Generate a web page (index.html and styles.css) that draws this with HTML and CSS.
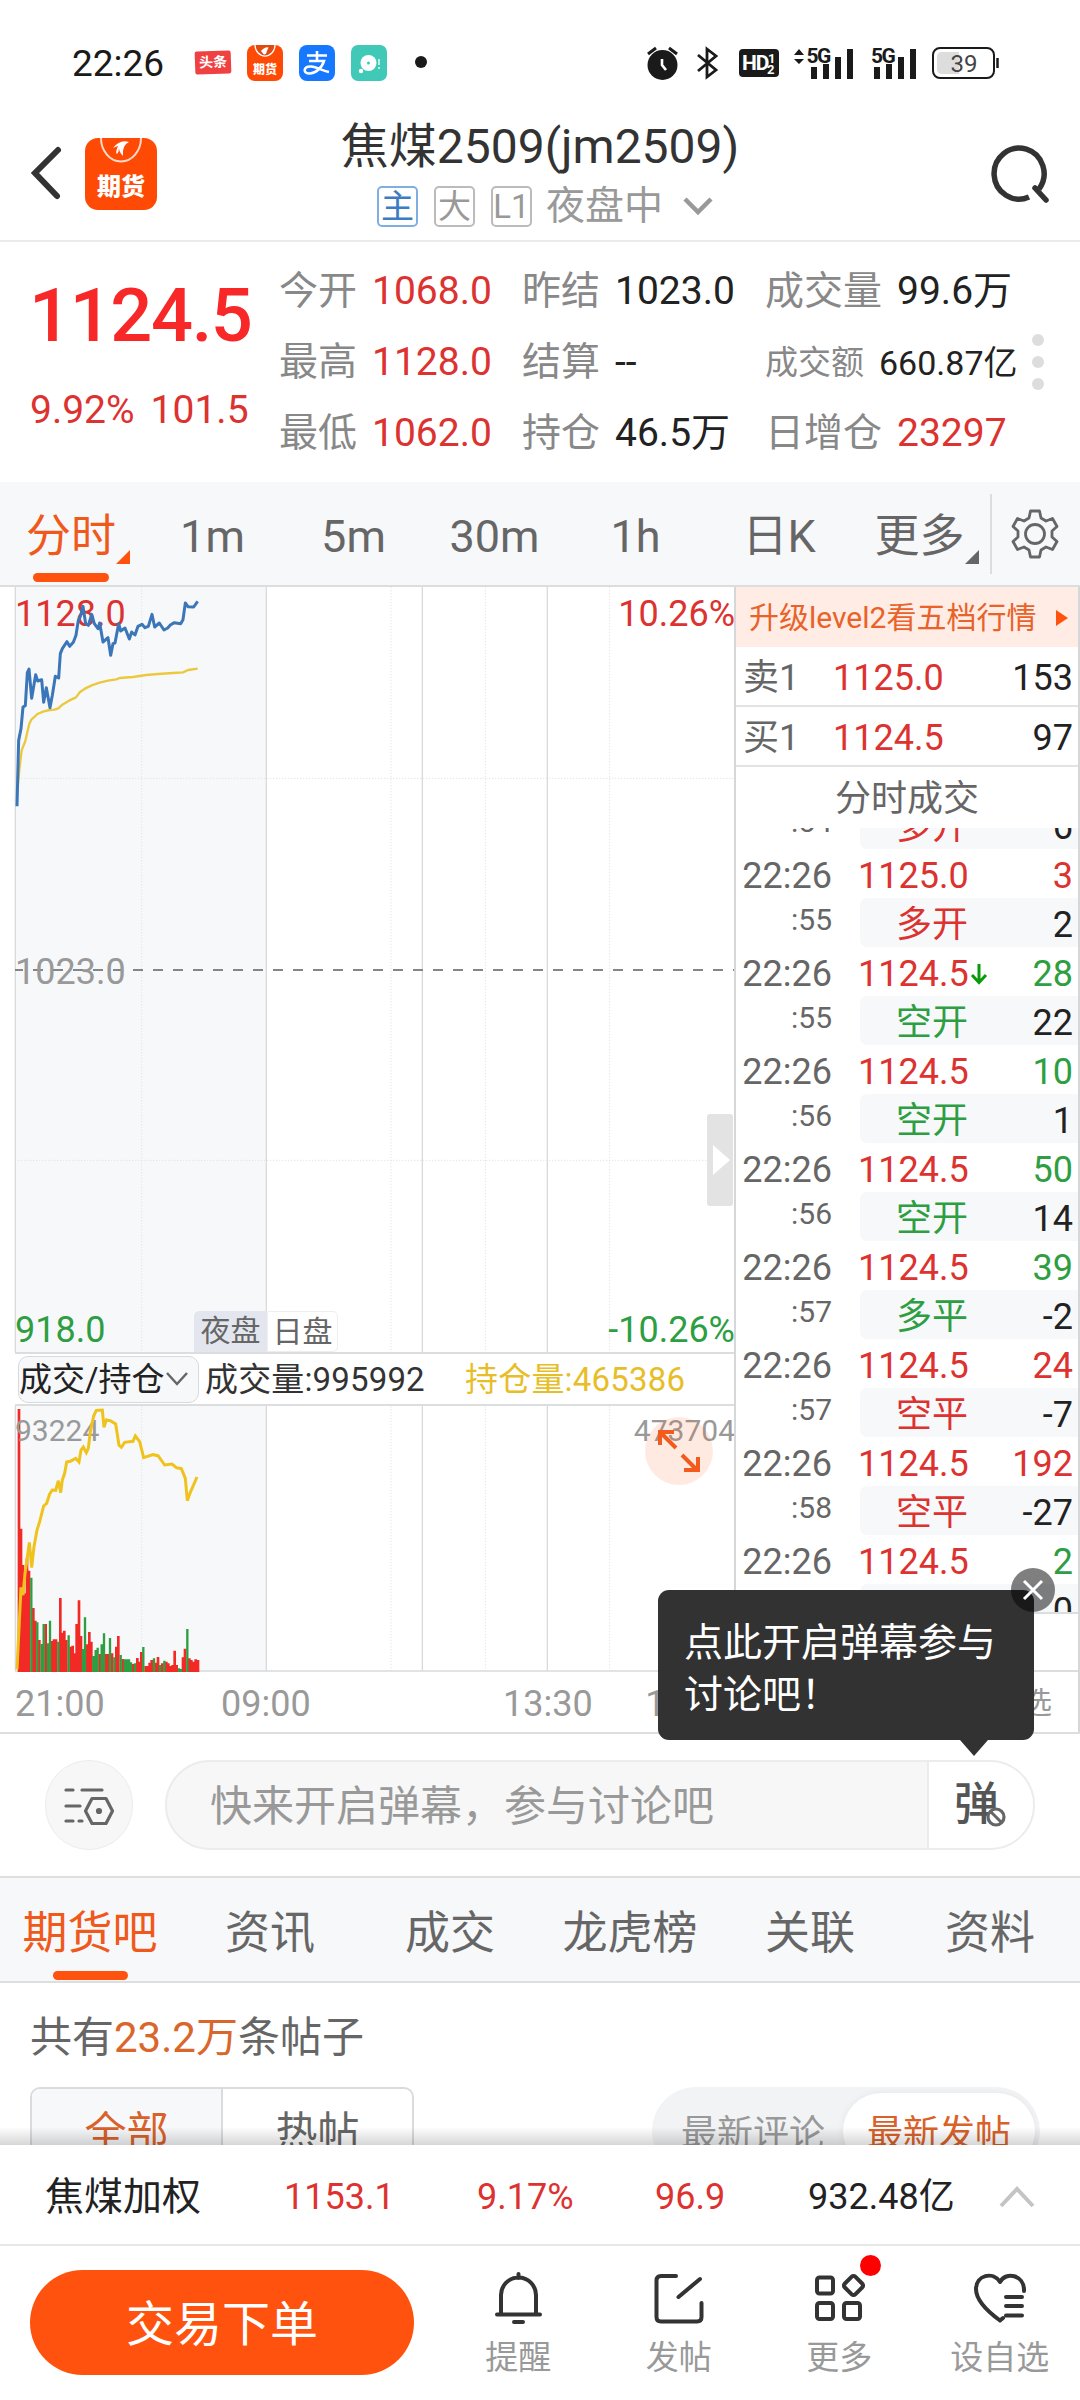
FILE: index.html
```html
<!DOCTYPE html>
<html lang="zh-CN">
<head>
<meta charset="utf-8">
<title>焦煤2509</title>
<link rel="stylesheet" href="styles.css">
</head>
<body>
<div class="screen">
  <div class="status">
    <span class="clock">22:26</span>
    <span class="app toutiao">头条</span>
    <svg class="app" width="36" height="36" viewBox="0 0 72 72"><rect width="72" height="72" rx="16" fill="#ff4a05"/><path d="M16 0a20 22 0 0 0 40 0" fill="#e04a10" stroke="#fff" stroke-width="2.5"/><path d="M28 12q8-9 15-7q-3 6-5 13q-5 2-6-1z" fill="#fff"/><text x="36" y="57" class="logo-text">期货</text></svg>
    <svg class="app" width="36" height="36" viewBox="0 0 36 36"><rect width="36" height="36" rx="8" fill="#1677ff"/><path d="M8 10.500H28M18 6V16M10 16H25C23 23 16 29 10 28.500C3 28 5 21 12 21.500C18 22 24 26 30 27" fill="none" stroke="#fff" stroke-width="2.600"/></svg>
    <svg class="app" width="36" height="36" viewBox="0 0 36 36"><rect width="36" height="36" rx="7" fill="#41c9b7"/><circle cx="17.500" cy="18" r="8" fill="#fff"/><circle cx="17.500" cy="18" r="1.500" fill="#41c9b7"/><circle cx="10" cy="26" r="2.200" fill="#fff"/><path d="M28 14v6M28 22v2" stroke="#fff" stroke-width="1.300"/></svg>
    <span class="dot"></span>
    <div class="status-right">
      <svg width="31" height="36" viewBox="0 0 31 36"><circle cx="15.500" cy="20" r="15" fill="#1a1a1a"/><path d="M1 9L9 3M30 9L22 3" stroke="#1a1a1a" stroke-width="3"/><path d="M15 14V20L19 25" fill="none" stroke="#fff" stroke-width="2.600"/></svg>
      <svg class="bt" width="22" height="34" viewBox="0 0 22 34"><path d="M1 9L19 24L10 31V3L19 10L1 25" fill="none" stroke="#1a1a1a" stroke-width="2.800"/></svg>
      <svg class="hd" width="40" height="28" viewBox="0 0 40 28"><rect width="40" height="28" rx="4" fill="#1a1a1a"/><text x="3" y="21" class="hd-a">HD</text><text x="29" y="14" class="hd-b">1</text><text x="28" y="25" class="hd-b">2</text></svg>
      <svg class="sig1" width="60" height="36" viewBox="0 -2 60 36"><path d="M0 8L5 2L10 8ZM0 12H10L5 17Z"/><text x="12.500" y="15.500" class="g5">5G</text><path d="M17 20h6v12h-6zM29 17h6v15h-6zM41 10h6v22h-6zM53 2h6v30h-6z"/></svg>
      <svg class="sig2" width="46" height="36" viewBox="0 -2 46 36"><text x="0" y="15.500" class="g5">5G</text><path d="M3 20h6v12h-6zM15 17h6v15h-6zM27 10h6v22h-6zM39 2h6v30h-6z"/></svg>
      <svg class="bat" width="68" height="32" viewBox="0 0 68 32"><rect x="1" y="1" width="61" height="30" rx="7" fill="#fff" stroke="#1a1a1a" stroke-width="2"/><path d="M10 5H27V27H10Q5 27 5 22V10Q5 5 10 5Z" fill="#ddd"/><path d="M65.500 11V21" stroke="#1a1a1a" stroke-width="2.500"/><text x="32" y="25" class="bat-t">39</text></svg>
    </div>
  </div>

  <header class="head">
    <svg class="back" width="30" height="54" viewBox="0 0 30 54"><path d="M27 4L4 27L26 50" fill="none" stroke="#333" stroke-width="6" stroke-linecap="round"/></svg>
    <svg class="logo" width="72" height="72" viewBox="0 0 72 72"><rect width="72" height="72" rx="13" fill="#ff4a05"/><path d="M16 0a20 23.500 0 0 0 40 0" fill="none" stroke="#ffd9c8" stroke-width="2"/><path d="M28 10Q35 1 44 4Q37 7 38 18Q34 14 34 10Q34 14 32 16Q30 15 33 8Q30 9 28 10Z" fill="#fff"/><text x="36" y="57" class="logo-text">期货</text></svg>
    <div class="titles">
      <div class="title">焦煤2509(jm2509)</div>
      <div class="sub"><span class="tag blue">主</span><span class="tag">大</span><span class="tag">L1</span><span class="state">夜盘中</span><svg width="30" height="20" viewBox="0 0 30 20"><path d="M2 2L15 15L28 2" fill="none" stroke="#999" stroke-width="4.500"/></svg></div>
    </div>
    <svg class="search" width="58" height="58" viewBox="0 0 58 58"><path d="M37 52A25 25.500 0 1 1 47 44" fill="none" stroke="#333" stroke-width="5.500"/><path d="M43 43L54 55" stroke="#333" stroke-width="5.500" stroke-linecap="round"/></svg>
  </header>

  <section class="quote">
    <div class="last"><div class="price">1124.5</div><div class="chg"><span>9.92%</span><span>101.5</span></div></div>
    <div class="grid">
      <div class="c"><i>今开</i><b class="r">1068.0</b></div><div class="c"><i>昨结</i><b>1023.0</b></div><div class="c"><i>成交量</i><b>99.6万</b></div>
      <div class="c"><i>最高</i><b class="r">1128.0</b></div><div class="c"><i>结算</i><b>--</b></div><div class="c small"><i>成交额</i><b>660.87亿</b></div>
      <div class="c"><i>最低</i><b class="r">1062.0</b></div><div class="c"><i>持仓</i><b>46.5万</b></div><div class="c"><i>日增仓</i><b class="r">23297</b></div>
    </div>
    <div class="more-dots"><s></s><s></s><s></s></div>
  </section>

  <nav class="periods">
    <span class="on">分时</span><span>1m</span><span>5m</span><span>30m</span><span>1h</span><span>日K</span><span class="more">更多</span>
    <div class="gear"><svg width="48" height="50" viewBox="0 0 48 50"><path d="M19.500 2H28.500L30 9L35 12L41.500 9.500L46 17.500L41 22V28L46 32.500L41.500 40.500L35 38L30 41L28.500 48H19.500L18 41L13 38L6.500 40.500L2 32.500L7 28V22L2 17.500L6.500 9.500L13 12L18 9Z" fill="none" stroke="#666" stroke-width="2.800" stroke-linejoin="round"/><circle cx="24" cy="25" r="9.500" fill="none" stroke="#666" stroke-width="2.800"/></svg></div>
  </nav>

  <main class="market">
    <div class="charts">
      <div class="main-chart">
        <svg width="720" height="765" viewBox="46 20 2160 2295">
          <rect x="46" y="20" width="755" height="2295" fill="#f7f8fa"/>
          <g fill="none" stroke="#e4e4e6" stroke-width="3" stroke-dasharray="4 5"><path d="M426 20V2315M1174 20V2315M1457 20V2315M1830 20V2315M46 594H2206M46 1740H2206"/></g>
          <path d="M47 20V2315M800 20V2315M1268 20V2315M1643 20V2315" stroke="#d9dadc" stroke-width="4"/>
          <path d="M46 1169H2206" stroke="#858585" stroke-width="6" stroke-dasharray="30 30" stroke-dashoffset="6"/>
        </svg>
        <div class="lab tl r">1128.0</div><div class="lab tr r">10.26%</div><div class="lab ml">1023.0</div>
        <div class="lab bl g">918.0</div><div class="lab br g">-10.26%</div>
        <svg class="lines" width="720" height="765" viewBox="46 20 2160 2295" fill="none" stroke-linejoin="round">
          <path d="M54 620L60 560L66 510L77 482L83 455L89 430L95 418L104 410L113 401L132 393L150 389L165 388L176 384L188 373L208 361L229 351L240 336L256 325L276 315L300 307L325 301L350 297L360 293L400 290L440 284L475 281L520 278L550 276L565 269L594 265" stroke="#ecc83f" stroke-width="7"/>
          <path d="M52 678L57 480L64 445L70 380L77 376L83 277L88 266L96 354L108 283L114 302L126 298L132 366L140 322L151 382L158 345L167 288L177 293L182 220L188 205L202 184L210 198L221 186L229 165L236 120L243 105L250 78L258 130L266 135L276 102L284 130L295 145L300 128L310 185L325 172L333 225L340 190L346 188L357 130L363 152L376 143L389 176L396 155L406 164L415 138L427 132L436 142L446 138L457 102L465 140L479 128L493 149L504 143L512 134L524 127L543 130L550 118L557 68L565 79L582 80L594 63" stroke="#3a76b8" stroke-width="9"/>
        </svg>
        <div class="sessions"><span>夜盘</span><span>日盘</span></div>
        <div class="handle"></div>
      </div>
      <div class="indicator"><span class="pick">成交/持仓<svg width="24" height="16" viewBox="0 0 24 16"><path d="M2 2L12 13L22 2" fill="none" stroke="#666" stroke-width="2.500"/></svg></span><span class="vol">成交量:995992</span><span class="oi">持仓量:465386</span></div>
      <div class="vol-chart">
        <svg width="720" height="266" viewBox="46 198 2160 798">
          <rect x="46" y="198" width="755" height="798" fill="#f7f8fa"/>
          <path d="M426 198V992M1174 198V992M1457 198V992M1830 198V992" stroke="#e4e4e6" stroke-width="3" stroke-dasharray="4 5"/>
          <path d="M47 198V992M800 198V992M1268 198V992M1643 198V992M46 993H2206" stroke="#d9dadc" stroke-width="4"/>
          <path d="M58 996V207M64 996V566M70 996V675M76 996V760M82 996V655M88 996V692M101 996V804M107 996V842M119 996V900M138 996V852M157 996V903M163 996V898M169 996V898M182 996V774M188 996V878M194 996V872M200 996V900M213 996V920M219 996V917M225 996V940M231 996V852M238 996V781M244 996V888M263 996V913M269 996V876M275 996V905M300 996V942M319 996V942M325 996V942M337 996V940M350 996V920M356 996V888M369 996V957M400 996V972M413 996V954M419 996V965M425 996V936M438 996V978M444 996V978M450 996V968M456 996V960M469 996V968M475 996V951M488 996V970M500 996V965M506 996V970M512 996V978M519 996V975M525 996V932M531 996V975M550 996V952M556 996V926M569 996V955M575 996V960M581 996V965M588 996V958M595 996V960" stroke="#f22a26" stroke-width="8"/>
          <path d="M95 996V713M113 996V847M126 996V912M132 996V852M145 996V910M151 996V842M176 996V905M207 996V886M250 996V927M256 996V832M281 996V948M288 996V930M294 996V923M306 996V913M313 996V880M331 996V894M344 996V952M363 996V945M375 996V958M381 996V958M388 996V958M394 996V967M406 996V970M431 996V921M463 996V955M481 996V975M494 996V962M538 996V985M544 996V987M563 996V867" stroke="#2e9e43" stroke-width="7"/>
        </svg>
        <div class="lab vl">93224</div><div class="lab vr">473704</div>
        <svg class="lines" width="720" height="266" viewBox="46 198 2160 798" fill="none"><path d="M52 988L58 865L64 742L70 765L76 700L82 660L89 607L96 683L103 620L112 570L120 545L132 498L141 490L150 462L158 450L168 451L176 422L183 458L188 420L195 400L201 366L212 364L228 355L238 366L244 330L251 321L260 338L266 325L272 275L282 228L290 211L308 210L313 262L320 240L332 242L348 252L358 316L365 322L375 307L400 304L407 288L420 305L432 353L460 344L475 347L495 375L517 372L530 383L545 386L557 415L563 482L572 457L592 411" stroke="#f0c21c" stroke-width="9"/></svg>
        <svg class="expand" width="68" height="68" viewBox="0 0 68 68"><circle cx="34" cy="34" r="34" fill="#ff5a1c" fill-opacity=".13"/><path d="M31 31L16 16M15 28V15H29M37 38L52 53M53 40V53H39" fill="none" stroke="#f35a1e" stroke-width="4"/></svg>
      </div>
      <div class="axis"><span>21:00</span><span class="t2">09:00</span><span class="t3">13:30</span><span class="t4">15:00</span></div>
    </div>

    <aside class="book">
      <div class="upgrade"><span>升级level2看五档行情</span><svg width="12" height="16" viewBox="0 0 12 16"><path d="M0 0L12 8L0 16Z" fill="#ff520e"/></svg></div>
      <div class="lvl"><span>卖1</span><b>1125.0</b><em>153</em></div>
      <div class="lvl"><span>买1</span><b>1124.5</b><em>97</em></div>
      <div class="ticks-title">分时成交</div>
      <div class="ticks">
        <div class="tick first"><time>22:26</time><b>1125.0</b><em class="r">6</em><small>:54</small><div class="kind"><u class="r">多开</u><q>6</q></div></div>
        <div class="tick"><time>22:26</time><b>1125.0</b><em class="r">3</em><small>:55</small><div class="kind"><u class="r">多开</u><q>2</q></div></div>
        <div class="tick"><time>22:26</time><b>1124.5<svg width="18" height="24" viewBox="0 0 18 24"><path d="M9 2V20M2 13L9 20.500L16 13" fill="none" stroke="#099b09" stroke-width="3"/></svg></b><em class="g">28</em><small>:55</small><div class="kind"><u class="g">空开</u><q>22</q></div></div>
        <div class="tick"><time>22:26</time><b>1124.5</b><em class="g">10</em><small>:56</small><div class="kind"><u class="g">空开</u><q>1</q></div></div>
        <div class="tick"><time>22:26</time><b>1124.5</b><em class="g">50</em><small>:56</small><div class="kind"><u class="g">空开</u><q>14</q></div></div>
        <div class="tick"><time>22:26</time><b>1124.5</b><em class="g">39</em><small>:57</small><div class="kind"><u class="g">多平</u><q>-2</q></div></div>
        <div class="tick"><time>22:26</time><b>1124.5</b><em class="r">24</em><small>:57</small><div class="kind"><u class="r">空平</u><q>-7</q></div></div>
        <div class="tick"><time>22:26</time><b>1124.5</b><em class="r">192</em><small>:58</small><div class="kind"><u class="r">空平</u><q>-27</q></div></div>
        <div class="tick"><time>22:26</time><b>1124.5</b><em class="g">2</em><small></small><div class="kind"><u></u><q>0</q></div></div>
      </div>
      <div class="book-gap"></div>
      <div class="book-foot">选</div>
    </aside>

    <div class="tip">点此开启弹幕参与讨论吧！
      <svg class="close" width="44" height="44" viewBox="0 0 44 44"><circle cx="22" cy="22" r="22" fill="#000" fill-opacity=".5"/><path d="M13 13L31 31M31 13L13 31" stroke="#fff" stroke-width="3"/></svg>
    </div>
  </main>

  <section class="danmu">
    <div class="set"><svg width="50" height="46" viewBox="0 0 50 46" fill="none" stroke="#666" stroke-width="3.200" stroke-linecap="round"><path d="M2 6H9M18 6H38M2 22H16M2 37H9M15 37H18"/><path d="M28 14.500H42L48.500 27L42 39.500H28L21.500 27Z" stroke-linejoin="round"/><circle cx="35" cy="27" r="1.500"/></svg></div>
    <div class="field"><span>快来开启弹幕，参与讨论吧</span><div class="toggle">弹<svg width="22" height="22" viewBox="0 0 22 22"><circle cx="11" cy="11" r="8" fill="#fff" stroke="#666" stroke-width="3.200"/><path d="M6 6L16 16" stroke="#666" stroke-width="3"/></svg></div></div>
  </section>

  <nav class="tabs"><span class="on">期货吧</span><span>资讯</span><span>成交</span><span>龙虎榜</span><span>关联</span><span>资料</span></nav>

  <section class="posts">
    <div class="count">共有<b>23.2万</b>条帖子</div>
    <div class="filters"><div class="seg"><span class="on">全部</span><span>热帖</span></div><div class="sort"><span>最新评论</span><span class="on">最新发帖</span></div></div>
  </section>

  <footer class="foot">
    <div class="index"><span class="n">焦煤加权</span><span class="r v1">1153.1</span><span class="r v2">9.17%</span><span class="r v3">96.9</span><span class="v4">932.48亿</span><svg width="36" height="24" viewBox="0 0 36 24"><path d="M2 21L18 4L34 21" fill="none" stroke="#c4c4c4" stroke-width="4"/></svg></div>
    <div class="actions">
      <div class="trade">交易下单</div>
      <div class="act"><svg width="54" height="54" viewBox="0 0 54 54"><path d="M10 43V25A17.500 17.500 0 0 1 45 25V43M27.500 8V4M6 44.500H49M23 52H32"/></svg>提醒</div>
      <div class="act"><svg width="54" height="54" viewBox="0 0 54 54"><path d="M24 6H9Q4.500 6 4.500 10.500V47Q4.500 51.500 9 51.500H45Q49.500 51.500 49.500 47V33M26.500 27L48 9"/></svg>发帖</div>
      <div class="act"><svg width="54" height="54" viewBox="0 0 54 54"><rect x="5" y="7.500" width="16" height="16" rx="2.500"/><rect x="5" y="33" width="16" height="16" rx="2.500"/><rect x="32" y="33" width="16" height="16" rx="2.500"/><rect x="-7.500" y="-7.500" width="15" height="15" rx="2.500" transform="translate(41.500 15.500) rotate(45)"/></svg>更多<s class="badge"></s></div>
      <div class="act"><svg width="54" height="54" viewBox="0 0 54 54"><path d="M27 50.500Q3 33 3 19C3 5 20 1 27 12C33 1 51 5 51 20V21M33 27H49M33 36H49M33 45.500H49M27 50.500L30 48"/></svg>设自选</div>
    </div>
  </footer>
</div>
</body>
</html>
```
FILE: styles.css
```css
* { box-sizing: border-box; }
body { margin: 0; background: #fff; }
.screen {
  width: 1080px; height: 2400px; overflow: hidden; background: #fff; color: #222;
  font-family: Roboto, "Noto Sans CJK SC", sans-serif; display: flex; flex-direction: column;
  font-weight: 400; line-height: 1;
}
.screen > * { flex: none; }
svg { display: block; flex: none; overflow: visible; }
i, em, u, b, s, q { font-style: normal; text-decoration: none; font-weight: 400; }
q::before, q::after { content: none; }
.r { color: #dc3230; }
.g { color: #2e9e43; }

.status { height: 124px; padding-left: 72px; display: flex; align-items: center; }
.clock { font-size: 37px; width: 123px; color: #1a1a1a; padding-top: 2px; }
.app { margin-right: 16px; margin-top: 1px; }
.toutiao {
  width: 36px; height: 23px; background: #f04142; color: #fff; font-size: 14px; line-height: 22px;
  font-weight: 700; text-align: center; transform: rotate(-2deg); border-radius: 2px;
}
.logo-text { font: 900 24px "Noto Sans CJK SC", sans-serif; fill: #fff; text-anchor: middle; }
.dot { width: 12px; height: 12px; border-radius: 6px; background: #1a1a1a; margin-left: 12px; }
.status-right { margin-left: 220px; display: flex; align-items: center; fill: #1a1a1a; padding-top: 1px; }
.bt { margin-left: 19px; }
.hd { margin-left: 20px; }
.sig1 { margin-left: 15px; }
.sig2 { margin-left: 17px; }
.bat { margin-left: 15px; }
.hd-a { font: 700 21px Roboto; fill: #fff; letter-spacing: -1px; }
.hd-b { font: 700 13px Roboto; fill: #fff; }
.g5 { font: 700 21px Roboto; letter-spacing: -1.5px; }
.bat-t { font: 400 24px Roboto; fill: #444; text-anchor: middle; }

.head { height: 118px; border-bottom: 2px solid #ebebeb; display: flex; position: relative; padding-left: 31px; }
.back { margin-top: 22px; }
.logo { margin: 14px 0 0 24px; }
.titles { flex: 1; margin-left: -157px; display: flex; flex-direction: column; align-items: center; margin-right: -88px; }
.title { font-size: 48px; line-height: 48px; color: #333; margin: -1px 0 15px; }
.sub { display: flex; align-items: center; height: 41px; font-size: 39px; color: #999; padding-left: 10px; }
.tag { width: 41px; height: 41px; border: 2px solid #bbb; border-radius: 5px; font-size: 33px; line-height: 37px; text-align: center; margin-right: 16px; }
.tag.blue { color: #3c7cc4; border-color: #7faee0; }
.state { margin: 0 20px 0 -2px; }
.search { margin: 21px 30px 0 auto; }

.quote { height: 240px; display: flex; }
.last { width: 279px; padding: 36px 0 0 29px; }
.price { font-size: 74px; line-height: 76px; font-weight: 500; color: #f82828; letter-spacing: -1.4px; }
.chg { display: flex; font-size: 39px; line-height: 40px; margin-top: 36px; gap: 16px; color: #dc3230; padding-left: 1px; }
.grid { width: 741px; display: grid; grid-template-columns: 243px 243px 1fr; grid-template-rows: repeat(3, 71px); padding-top: 14px; font-size: 39px; }
.c { display: flex; align-items: center; white-space: nowrap; }
.c i { color: #888; margin-right: 15px; }
.small { font-size: 33px; }
.small b { font-size: 34px; }
.more-dots { width: 36px; display: flex; flex-direction: column; align-items: center; gap: 10px; padding-top: 92px; }
.more-dots s { width: 12px; height: 12px; border-radius: 6px; background: #ddd; }

.periods { height: 105px; background: #f7f8fa; border-bottom: 2px solid #dcdddf; display: flex; font-size: 45px; color: #666; position: relative; }
.periods span { width: 141px; line-height: 110px; text-align: center; position: relative; }
.periods .on { color: #f0591c; width: 142px; }
.periods .more { width: 135px; }
.periods span:nth-child(6) { width: 146px; }
.periods .on::before { content: ""; position: absolute; left: 33px; bottom: 3px; width: 76px; height: 9px; border-radius: 5px; background: #ff520e; }
.periods .on::after, .periods .more::after { content: ""; position: absolute; left: 116px; top: 68px; border-left: 14px solid transparent; border-bottom: 14px solid #ff520e; }
.periods .more::after { left: 113px; border-bottom-color: #666; }
.gear { height: 80px; margin: 12px 0 0 3px; width: 88px; border-left: 2px solid #dcdddf; display: flex; align-items: center; justify-content: center; }

.market { height: 1147px; display: flex; position: relative; border-bottom: 2px solid #dedede; }
.charts { width: 735px; padding-left: 15px; }
.main-chart { height: 765px; position: relative; }
.lab { position: absolute; font-size: 36px; line-height: 36px; color: #999; left: 0; }
.lab.r { color: #dc3230; }
.lab.g { color: #2e9e43; }
.tl, .tr { top: 9px; }
.ml { top: 367px; }
.bl, .br { bottom: 4px; }
.lab.tr, .lab.br, .lab.vr { left: auto; right: 0; }
.vl, .vr { font-size: 30px; top: 7px; }
.lines { position: absolute; left: 0; top: 0; }
.sessions { position: absolute; left: 179px; bottom: 0; display: flex; font-size: 30px; line-height: 40px; color: #666; text-align: center; }
.sessions span { width: 73px; height: 41px; background: #e3e6ee; border-radius: 5px 0 0 0; }
.sessions span + span { background: #fff; border: 1px solid #eee; width: 71px; border-radius: 0 5px 5px 0; }
.handle { position: absolute; right: 2px; top: 527px; width: 26px; height: 92px; background: #e3e3e3; border-radius: 3px; }
.handle::after { content: ""; position: absolute; left: 6px; top: 31px; border: solid transparent; border-width: 15px 0 15px 17px; border-left-color: #fff; }
.indicator { height: 54px; border: solid #dcdddf; border-width: 2px 0; display: flex; align-items: center; font-size: 33px; padding-left: 3px; }
.pick { width: 181px; height: 47px; border: 1px solid #d6d9de; border-radius: 10px; background: #f7f8fa; display: flex; align-items: center; white-space: nowrap; }
.vol { margin-left: 6px; width: 260px; color: #333; letter-spacing: .15px; }
.oi { color: #e8be28; letter-spacing: .2px; }
.vol-chart { height: 266px; position: relative; }
.expand { position: absolute; left: 630px; top: 11px; }
.axis { height: 60px; display: grid; grid-template-columns: 206px 282px 137px 95px; font-size: 36px; line-height: 65px; color: #999; }
.t4 { text-align: right; }

.book { width: 346px; margin-left: -1px; border: solid #d6d7d9; border-width: 0 2px 0 2px; position: relative; }
.upgrade { height: 60px; background: #ffece4; color: #e8622a; font-size: 30px; display: flex; align-items: center; justify-content: space-between; padding: 1px 10px 0 13px; white-space: nowrap; }
.lvl { height: 60px; border-bottom: 2px solid #e2e3e5; font-size: 36px; color: #666; display: flex; align-items: center; padding: 4px 5px 0 7px; }
.lvl span { width: 90px; }
.lvl b { width: 120px; color: #dc3230; }
.lvl em { flex: 1; text-align: right; color: #222; }
.ticks-title { height: 61px; line-height: 64px; text-align: center; font-size: 36px; color: #666; }
.ticks { height: 784px; overflow: hidden; }
.tick { height: 98px; display: grid; grid-template-columns: 96px minmax(0, 1fr) 80px; grid-template-rows: 49px 49px; align-items: center; font-size: 36px; }
.tick.first { margin-top: -77px; }
.tick time { color: #666; text-align: right; padding-top: 5px; }
.tick b { color: #dc3230; padding: 5px 0 0 26px; display: flex; align-items: center; gap: 1px; }
.tick em { text-align: right; padding: 5px 5px 0 0; }
.tick small { font-size: 30px; color: #666; text-align: right; padding-bottom: 5px; }
.kind { grid-column: 2 / 4; margin-left: 28px; height: 49px; background: #f7f8fa; border-radius: 7px 0 0 7px; display: flex; align-items: center; padding: 5px 5px 0 36px; justify-content: space-between; }
.book-gap { height: 60px; border: solid #dcdddf; border-width: 2px 0; }
.book-foot { font-size: 30px; line-height: 62px; color: #999; text-align: right; padding-right: 26px; }

.tip { position: absolute; left: 658px; top: 1003px; width: 376px; height: 150px; background: #323232; color: #fff; border-radius: 11px; padding: 27px 27px 0 26px; font-size: 39px; line-height: 52px; z-index: 2; }
.tip::after { content: ""; position: absolute; left: 302px; top: 150px; border: solid transparent; border-width: 16px 14px 0; border-top-color: #323232; }
.close { position: absolute; right: -21px; top: -22px; }

.danmu { height: 144px; border-bottom: 2px solid #dedede; display: flex; padding: 26px 45px 0; justify-content: space-between; }
.set { width: 88px; height: 90px; border-radius: 45px; background: #f7f7f7; border: 1px solid #ececec; display: flex; align-items: center; justify-content: center; }
.set svg { margin-top: 3px; }
.field { width: 870px; height: 90px; border-radius: 45px; background: #f7f7f7; border: 2px solid #ececec; overflow: hidden; display: flex; align-items: center; justify-content: space-between; padding-left: 43px; font-size: 42px; color: #999; }
.field > span { padding-top: 4px; }
.toggle { width: 106px; height: 88px; background: #fff; border-left: 2px solid #ececec; color: #555; font-size: 45px; font-weight: 500; line-height: 87px; padding-left: 25px; position: relative; }
.toggle svg { position: absolute; left: 56px; top: 45px; }

.tabs { height: 105px; background: #f7f8fa; border-bottom: 2px solid #dedede; display: flex; font-size: 45px; line-height: 111px; color: #666; text-align: center; }
.tabs span { flex: 1; position: relative; height: 103px; }
.tabs .on { color: #f0591c; }
.tabs .on::after { content: ""; position: absolute; left: 53px; bottom: 1px; width: 75px; height: 9px; border-radius: 5px; background: #ff520e; }

.posts { height: 162px; overflow: hidden; padding: 0 40px 0 30px; position: relative; }
.posts::after { content: ""; position: absolute; left: 0; right: 0; bottom: 0; height: 18px; background: linear-gradient(transparent, rgba(0,0,0,.16)); }
.count { font-size: 42px; line-height: 109px; height: 104px; color: #666; }
.count b { color: #d9662a; }
.filters { display: flex; justify-content: space-between; }
.seg { width: 384px; height: 88px; border: 2px solid #d9dbdf; border-radius: 10px; display: flex; overflow: hidden; font-size: 42px; line-height: 88px; text-align: center; color: #666; }
.seg span { flex: 1; }
.seg .on { background: #f7f8fa; color: #d9622a; border-right: 2px solid #d9dbdf; }
.sort { width: 388px; height: 88px; border-radius: 44px; background: #f2f3f5; padding: 6px 5px; display: flex; font-size: 36px; line-height: 83px; text-align: center; color: #999; }
.sort span { width: 186px; padding-left: 6px; height: 76px; }
.sort .on { width: 192px; margin-left: auto; padding: 0; background: #fff; border-radius: 38px; color: #d9622a; box-shadow: 0 0 6px #e4e5e8; }

.foot { height: 255px; background: #fff; }
.index { height: 101px; border-bottom: 2px solid #e8e8e8; display: flex; align-items: center; font-size: 36px; padding: 5px 0 0 45px; }
.index .n { font-size: 39px; width: 239px; }
.v1 { width: 193px; }
.v2 { width: 178px; }
.v3 { width: 153px; }
.v4 { width: 191px; }
.actions { display: flex; padding-top: 24px; }
.trade { margin-left: 30px; width: 384px; height: 105px; border-radius: 53px; background: #ff520e; color: #fff; font-size: 48px; line-height: 110px; text-align: center; margin-right: 24px; }
.act { width: 160.500px; display: flex; flex-direction: column; align-items: center; font-size: 33px; color: #999; gap: 17px; position: relative; }
.act svg { fill: none; stroke: #333; stroke-width: 4; stroke-linecap: round; stroke-linejoin: round; }
.badge { position: absolute; left: 101px; top: -15px; width: 21px; height: 21px; border-radius: 11px; background: #f00; }
```
